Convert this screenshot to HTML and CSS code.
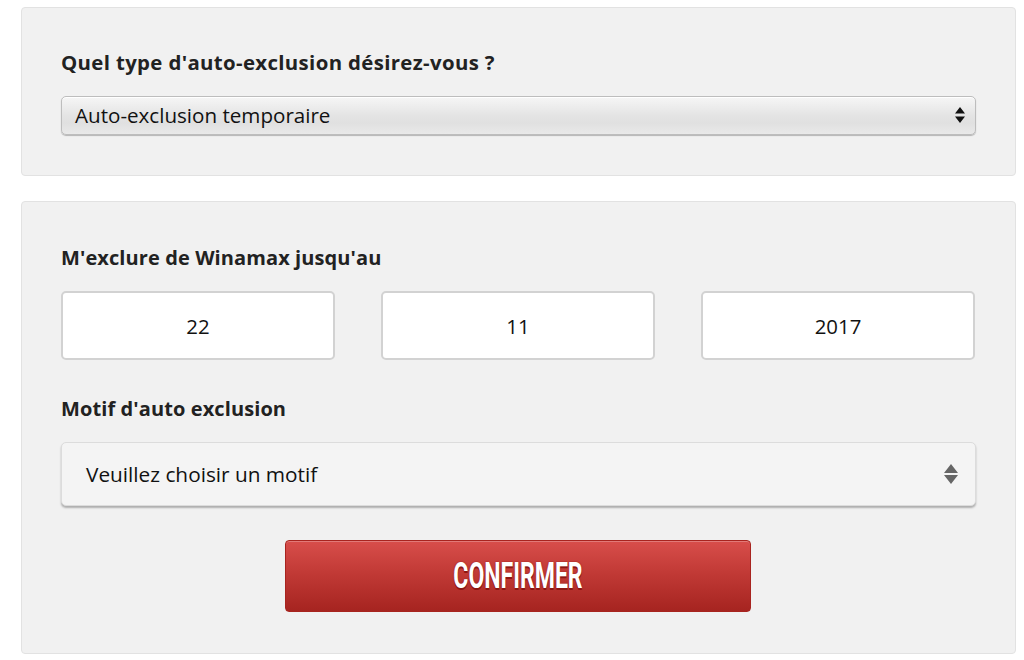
FILE: index.html
```html
<!DOCTYPE html>
<html lang="fr">
<head>
<meta charset="utf-8">
<link rel="stylesheet" href="styles.css">
</head>
<body>
<div class="page">
  <section class="panel panel-type">
    <h2 class="label label-type">Quel type d'auto-exclusion désirez-vous ?</h2>
    <div class="select-mac">
      <span>Auto-exclusion temporaire</span>
      <svg class="arrows" width="10" height="18" viewBox="0 0 10 18"><path d="M5 1 L10 7.5 L0 7.5 Z M0 10.5 L10 10.5 L5 17 Z" fill="#111"/></svg>
    </div>
  </section>
  <section class="panel panel-form">
    <h2 class="label">M'exclure de Winamax jusqu'au</h2>
    <div class="dates">
      <div class="date-box">22</div>
      <div class="date-box">11</div>
      <div class="date-box">2017</div>
    </div>
    <h2 class="label label-motif">Motif d'auto exclusion</h2>
    <div class="select-motif">
      <span>Veuillez choisir un motif</span>
      <svg class="arrows2" width="16" height="22" viewBox="0 0 16 22"><path d="M8 1 L15 10 L1 10 Z M1 12 L15 12 L8 21 Z" fill="#666"/></svg>
    </div>
    <div class="btn-row">
      <button class="confirm"><span>CONFIRMER</span></button>
    </div>
  </section>
</div>
</body>
</html>
```

FILE: styles.css
```css
* { box-sizing: border-box; }
html, body { margin: 0; padding: 0; background: #fff; }
body { font-family: "Open Sans", "Liberation Sans", sans-serif; color: #222; }
.page { padding: 7px 9px 0 21px; width: 1024px; }
.panel {
  background: #f1f1f1;
  border: 1px solid #e2e2e2;
  border-radius: 4px;
  padding: 0 39px;
  width: 995px;
}
.panel-type { height: 169px; padding-top: 40px; }
.panel-form { margin-top: 25px; height: 453px; padding-top: 42px; }
.label {
  margin: 0;
  font-size: 20px;
  font-weight: 700;
  line-height: 28px;
  color: #222;
  letter-spacing: 0.1px;
}
.label-type { font-size: 20.4px; letter-spacing: 0.35px; }
.select-mac {
  margin-top: 20px;
  height: 39px;
  border: 1px solid #bdbdbd;
  border-radius: 5px;
  background: linear-gradient(#f6f6f6 0%, #e4e4e4 50%, #e0e0e0 70%, #e9e9e9 100%);
  box-shadow: inset 0 1px 0 #fff, 0 1px 1px rgba(0,0,0,0.25);
  display: flex;
  align-items: center;
  justify-content: space-between;
  padding: 0 10px 2px 13px;
  font-size: 20.6px;
  color: #111;
}
.arrows { display: block; }
.dates {
  margin-top: 19px;
  display: grid;
  grid-template-columns: repeat(3, 274px);
  column-gap: 46px;
}
.date-box {
  height: 69px;
  background: #fff;
  border: 2px solid #d2d2d2;
  border-radius: 5px;
  display: flex;
  align-items: center;
  justify-content: center;
  font-size: 20.4px;
  color: #111;
}
.label-motif { margin-top: 35px; }
.select-motif {
  margin-top: 19px;
  height: 64px;
  background: #f4f4f4;
  border: 1px solid #dcdcdc;
  border-radius: 5px;
  box-shadow: 0 2px 2px rgba(0,0,0,0.28);
  display: flex;
  align-items: center;
  justify-content: space-between;
  padding: 0 16px 0 24px;
  font-size: 20.8px;
  color: #111;
}
.arrows2 { display: block; }
.btn-row { display: flex; justify-content: center; margin-top: 34px; padding-right: 2px; }
.confirm {
  width: 466px;
  height: 72px;
  border: 1px solid #a8241f;
  border-radius: 4px;
  background: linear-gradient(#d84e4b 0%, #c43c38 40%, #a62420 100%);
  box-shadow: inset 0 1px 0 rgba(255,255,255,0.25);
  padding: 0;
  display: flex;
  align-items: center;
  justify-content: center;
  cursor: pointer;
}
.confirm span {
  display: inline-block;
  font-family: "Roboto", "Liberation Sans", sans-serif;
  font-weight: 700;
  font-size: 36px;
  line-height: 1;
  color: #fff;
  transform: scaleX(0.64);
  text-shadow: 0 2px 0 #8c1612, 0 0 2px #8c1612;
  letter-spacing: 0;
}
```
